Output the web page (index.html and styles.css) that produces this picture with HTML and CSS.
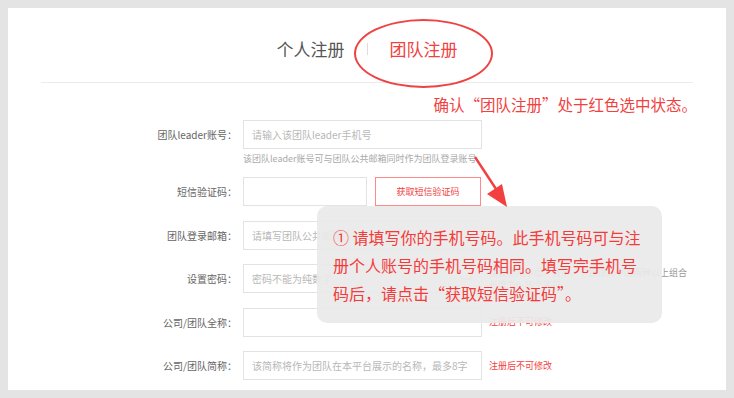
FILE: index.html
```html
<!DOCTYPE html>
<html lang="zh-CN">
<head>
    <meta charset="UTF-8">
    <title>团队注册</title>
    <link rel="stylesheet" href="styles.css">
</head>
<body>
    <div class="card">
        <div class="tabs">
            <span class="tab">个人注册</span>
            <span class="tab-sep"></span>
            <span class="tab active">团队注册</span>
        </div>
        <p class="note">确认“团队注册”处于红色选中状态。</p>

        <form class="form">
            <div class="row">
                <label class="label">团队leader账号：</label>
                <input class="input" placeholder="请输入该团队leader手机号">
                <div class="tip">该团队leader账号可与团队公共邮箱同时作为团队登录账号</div>
            </div>
            <div class="row row-gap">
                <label class="label">短信验证码：</label>
                <div class="sms">
                    <input class="input input-sms">
                    <button type="button" class="sms-btn">获取短信验证码</button>
                </div>
            </div>
            <div class="row">
                <label class="label">团队登录邮箱：</label>
                <input class="input" placeholder="请填写团队公共邮箱">
            </div>
            <div class="row">
                <label class="label">设置密码：</label>
                <div class="pwd">
                    <input class="input" placeholder="密码不能为纯数字">
                    <svg class="eye" width="14" height="9" viewBox="0 0 14 9">
                        <path d="M1 1.5 Q7 7.5 13 1.5" fill="none" stroke="#bbb" stroke-width="1.2"/>
                        <path d="M3 4.2 L1.8 6 M7 5.6 L7 7.8 M11 4.2 L12.2 6" stroke="#bbb" stroke-width="1.1"/>
                    </svg>
                </div>
                <div class="side side-gray">建议使用字母、数字、下划线其中的两种以上组合<br>长度为6-20个字符</div>
            </div>
            <div class="row">
                <label class="label">公司/团队全称：</label>
                <input class="input">
                <div class="side side-red">注册后不可修改</div>
            </div>
            <div class="row">
                <label class="label">公司/团队简称：</label>
                <input class="input" placeholder="该简称将作为团队在本平台展示的名称，最多8字">
                <div class="side side-red">注册后不可修改</div>
            </div>
        </form>

        <svg class="arrow" width="42" height="58" viewBox="0 0 42 58">
            <line x1="5" y1="4" x2="28" y2="39" stroke="#f23f3f" stroke-width="2.4"/>
            <polygon points="37,54 17,41 32,31" fill="#f23f3f"/>
        </svg>

        <div class="popup">
            ① 请填写你的手机号码。此手机号码可与注册个人账号的手机号码相同。填写完手机号码后，请点击“获取短信验证码”。
        </div>
    </div>
</body>
</html>
```

FILE: styles.css
```css
:root {
    --red: #f23f3f;
    --text: #666;
    --muted: #aaa;
    --line: #e3e3e3;
}

* {
    box-sizing: border-box;
}

body {
    margin: 0;
    padding: 8px;
    background: #e4e4e4;
    font-family: "Noto Sans CJK SC", "Noto Sans", sans-serif;
}

.card {
    position: relative;
    height: 382px;
    background: white;
}

/* tabs */
.tabs {
    display: flex;
    justify-content: center;
    align-items: center;
    gap: 22px;
    margin: 0 33px;
    padding: 29px 0 21px;
    border-bottom: 1px solid #ececec;
    font-size: 17px;
    line-height: 24px;
}

.tab {
    color: #555;
}

.tab.active {
    position: relative;
    color: var(--red);
}

.tab.active::after {
    content: "";
    position: absolute;
    left: -36px;
    right: -35px;
    top: -18px;
    bottom: -27px;
    border: 2px solid #ee4343;
    border-radius: 50%;
}

.tab-sep {
    width: 1px;
    height: 12px;
    background: #ddd;
}

.note {
    margin: 10px 0 0;
    padding-right: 29px;
    text-align: right;
    font-size: 15.5px;
    line-height: 22px;
    color: var(--red);
}

/* form */
.form {
    margin-top: 5px;
}

.row {
    display: grid;
    grid-template-columns: 229px 239px 1fr;
    column-gap: 6px;
    align-items: center;
    margin-bottom: 14.5px;
}

.row-gap {
    margin-top: -2.5px;
}

.label {
    text-align: right;
    font-size: 10px;
    color: var(--text);
}

.input {
    width: 239px;
    height: 29px;
    padding: 0 8px;
    border: 1px solid var(--line);
    font-family: inherit;
    font-size: 10px;
    color: #333;
    outline: none;
}

.input::placeholder {
    color: #b8b8b8;
}

.tip {
    grid-column: 2 / 4;
    margin-top: 4px;
    font-size: 9px;
    line-height: 12px;
    color: var(--muted);
}

.sms {
    display: flex;
    gap: 8px;
}

.input-sms {
    width: 124px;
}

.sms-btn {
    width: 106px;
    height: 29px;
    padding: 0;
    background: white;
    border: 1px solid #f88;
    color: var(--red);
    font-family: inherit;
    font-size: 9px;
}

.pwd {
    position: relative;
}

.eye {
    position: absolute;
    right: 9px;
    top: 11px;
}

.side {
    margin-left: 1px;
    font-size: 9px;
    line-height: 12px;
}

.side-gray {
    color: #999;
}

.side-red {
    color: var(--red);
}

/* overlay */
.arrow {
    position: absolute;
    left: 462px;
    top: 145px;
    z-index: 3;
}

.popup {
    position: absolute;
    left: 309px;
    top: 198px;
    z-index: 2;
    width: 345px;
    height: 117px;
    padding: 17px 16px 0;
    background: rgba(233, 233, 233, 0.93);
    border-radius: 10px;
    font-size: 16px;
    line-height: 28px;
    color: #f53a3a;
}
```
